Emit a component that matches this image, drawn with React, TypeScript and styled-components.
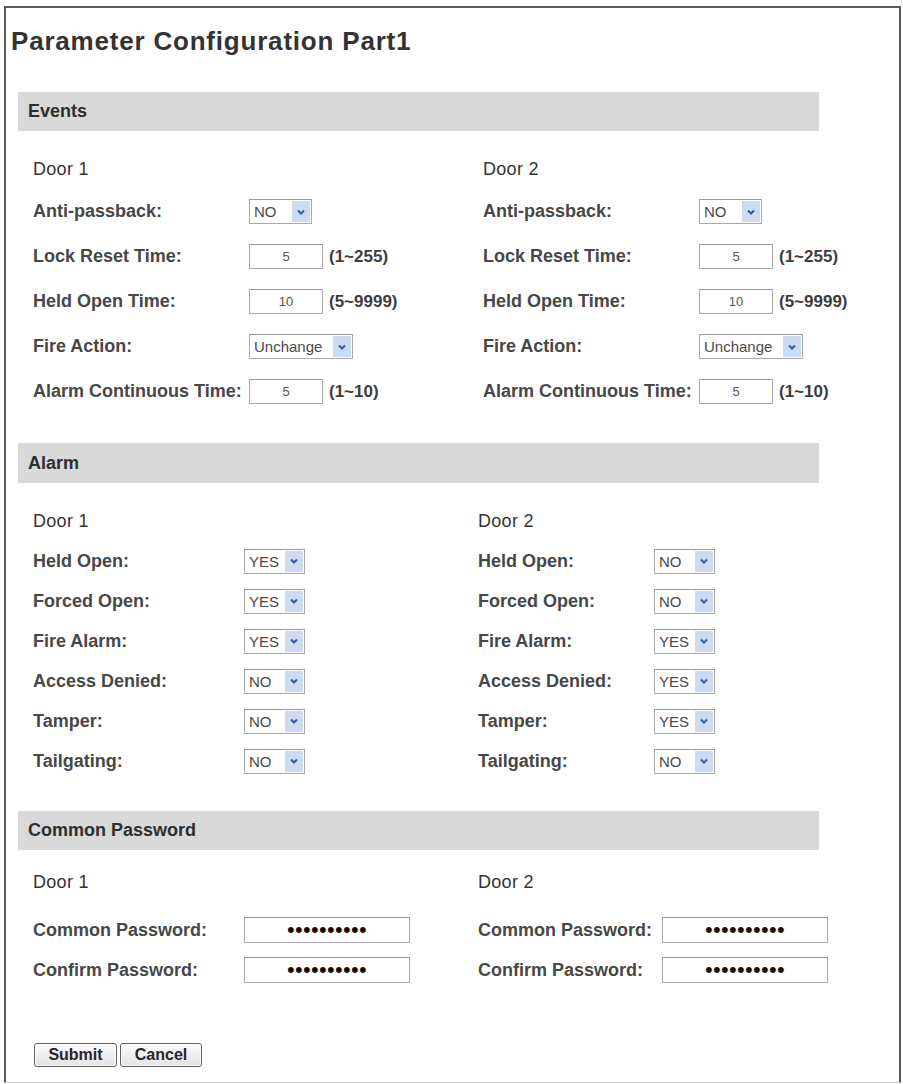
import React from "react";
import styled, { createGlobalStyle } from "styled-components";

const GlobalStyle = createGlobalStyle`
  html, body { margin: 0; padding: 0; background: #fff; }
  body { font-family: "Liberation Sans", Arial, sans-serif; color: #3d3d3d; }
`;

const Frame = styled.div`
  box-sizing: border-box;
  margin: 6px 0 0 4px;
  width: 897px;
  height: 1077px;
  border: 2px solid #5a5a5a;
  border-bottom: 1px solid #d0d0d0;
  padding: 0 0 0 12px;
  background: #fff;
  display: flex;
  flex-direction: column;
`;

const Title = styled.h1`
  margin: 18px 0 0 -7px;
  font-size: 26px;
  font-weight: 700;
  line-height: 30px;
  letter-spacing: 0.8px;
  color: #333;
`;

const SectionBar = styled.div<{ $top: number; $h: number }>`
  margin-top: ${(p) => p.$top}px;
  width: 801px;
  height: ${(p) => p.$h}px;
  box-sizing: border-box;
  padding-left: 10px;
  display: flex;
  align-items: center;
  background: #d9d9d9;
  font-size: 18px;
  font-weight: 700;
  color: #2e2e2e;
`;

const SectionBody = styled.div<{ $pad: number; $col: number }>`
  padding: ${(p) => p.$pad}px 0 0 15px;
  display: grid;
  grid-template-columns: ${(p) => p.$col}px 1fr;
`;

const Column = styled.div`
  display: flex;
  flex-direction: column;
`;

const DoorTitle = styled.div<{ $after: number }>`
  height: 40px;
  display: flex;
  align-items: center;
  margin-bottom: ${(p) => p.$after}px;
  font-size: 18px;
  font-weight: 400;
  letter-spacing: 0.3px;
  color: #333;
`;

const Row = styled.div<{ $h: number }>`
  height: ${(p) => p.$h}px;
  display: flex;
  align-items: center;
`;

const Label = styled.label<{ $w: number }>`
  width: ${(p) => p.$w}px;
  flex: none;
  font-size: 18px;
  font-weight: 700;
  color: #474747;
  white-space: nowrap;
`;

const SelectBox = styled.span<{ $w: number }>`
  box-sizing: border-box;
  width: ${(p) => p.$w}px;
  height: 25px;
  display: inline-flex;
  align-items: stretch;
  border: 1px solid #a9a9a9;
  border-top-color: #9a9a9a;
  background: #fff;
  padding: 1px;
`;

const NativeSelect = styled.select`
  appearance: none;
  -webkit-appearance: none;
  flex: 1;
  min-width: 0;
  border: none;
  outline: none;
  background: transparent;
  padding: 0 0 0 3px;
  margin: 0;
  font-family: "Liberation Sans", Arial, sans-serif;
  font-size: 15px;
  color: #4a4a4a;
`;

const ArrowBox = styled.span`
  width: 18px;
  flex: none;
  display: flex;
  align-items: center;
  justify-content: center;
  background: #cddbf2;
`;

const NumInput = styled.input`
  box-sizing: border-box;
  width: 74px;
  height: 25px;
  border: 1px solid #a9a9a9;
  border-top-color: #999;
  padding: 0;
  margin: 0;
  text-align: center;
  font-family: "Liberation Sans", Arial, sans-serif;
  font-size: 13px;
  color: #555;
  background: #fff;
`;

const Range = styled.span`
  margin-left: 6px;
  font-size: 17px;
  font-weight: 700;
  color: #3d3d3d;
  white-space: nowrap;
`;

const PassInput = styled.input`
  box-sizing: border-box;
  width: 166px;
  height: 26px;
  border: 1px solid #aaa;
  border-top-color: #999;
  padding: 0;
  margin: 0;
  text-align: center;
  font-family: "Liberation Sans", Arial, sans-serif;
  font-size: 22px;
  letter-spacing: 0.3px;
  color: #111;
  background: #fff;
`;

const ButtonBar = styled.div`
  margin: 53px 0 0 16px;
  display: flex;
  gap: 3px;
`;

const Button = styled.button<{ $w: number }>`
  box-sizing: border-box;
  width: ${(p) => p.$w}px;
  height: 24px;
  padding: 0;
  border: 1px solid #5f5f5f;
  border-radius: 3px;
  background: linear-gradient(#fbfbfb, #e3e3e3);
  box-shadow: inset 0 0 0 1px #fff;
  font-family: "Liberation Sans", Arial, sans-serif;
  font-size: 16px;
  font-weight: 700;
  color: #2a2330;
`;

const Chevron = () => (
  <svg width="8" height="6" viewBox="0 0 8 6">
    <polyline points="1,1.5 4,4.5 7,1.5" fill="none" stroke="#2f5aa8" strokeWidth="2" />
  </svg>
);

const Select = ({ value, options, width }: { value: string; options: string[]; width: number }) => (
  <SelectBox $w={width}>
    <NativeSelect defaultValue={value}>
      {options.map((o) => (
        <option key={o}>{o}</option>
      ))}
    </NativeSelect>
    <ArrowBox>
      <Chevron />
    </ArrowBox>
  </SelectBox>
);

const EventsColumn = ({ door, held }: { door: string; held: string }) => (
  <Column>
    <DoorTitle $after={0}>{door}</DoorTitle>
    <Row $h={45}>
      <Label $w={216}>Anti-passback:</Label>
      <Select value="NO" options={["NO", "YES"]} width={63} />
    </Row>
    <Row $h={45}>
      <Label $w={216}>Lock Reset Time:</Label>
      <NumInput defaultValue="5" />
      <Range>(1~255)</Range>
    </Row>
    <Row $h={45}>
      <Label $w={216}>Held Open Time:</Label>
      <NumInput defaultValue={held} />
      <Range>(5~9999)</Range>
    </Row>
    <Row $h={45}>
      <Label $w={216}>Fire Action:</Label>
      <Select value="Unchange" options={["Unchange", "Open", "Close"]} width={104} />
    </Row>
    <Row $h={45}>
      <Label $w={216}>Alarm Continuous Time:</Label>
      <NumInput defaultValue="5" />
      <Range>(1~10)</Range>
    </Row>
  </Column>
);

const alarmLabels = ["Held Open:", "Forced Open:", "Fire Alarm:", "Access Denied:", "Tamper:", "Tailgating:"];

const AlarmColumn = ({ door, values, labelW }: { door: string; values: string[]; labelW: number }) => (
  <Column>
    <DoorTitle $after={0}>{door}</DoorTitle>
    {alarmLabels.map((l, i) => (
      <Row $h={40} key={l}>
        <Label $w={labelW}>{l}</Label>
        <Select value={values[i]} options={["YES", "NO"]} width={61} />
      </Row>
    ))}
  </Column>
);

const PasswordColumn = ({ door, labelW }: { door: string; labelW: number }) => (
  <Column>
    <DoorTitle $after={8}>{door}</DoorTitle>
    <Row $h={40}>
      <Label $w={labelW}>Common Password:</Label>
      <PassInput type="password" defaultValue="1234567890" />
    </Row>
    <Row $h={40}>
      <Label $w={labelW}>Confirm Password:</Label>
      <PassInput type="password" defaultValue="1234567890" />
    </Row>
  </Column>
);

export default function App() {
  return (
    <>
      <GlobalStyle />
      <Frame>
        <Title>Parameter Configuration Part1</Title>

        <SectionBar $top={36} $h={39}>Events</SectionBar>
        <SectionBody $pad={18} $col={450}>
          <EventsColumn door="Door 1" held="10" />
          <EventsColumn door="Door 2" held="10" />
        </SectionBody>

        <SectionBar $top={29} $h={40}>Alarm</SectionBar>
        <SectionBody $pad={18} $col={445}>
          <AlarmColumn door="Door 1" values={["YES", "YES", "YES", "NO", "NO", "NO"]} labelW={211} />
          <AlarmColumn door="Door 2" values={["NO", "NO", "YES", "YES", "YES", "NO"]} labelW={176} />
        </SectionBody>

        <SectionBar $top={30} $h={39}>Common Password</SectionBar>
        <SectionBody $pad={12} $col={445}>
          <PasswordColumn door="Door 1" labelW={211} />
          <PasswordColumn door="Door 2" labelW={184} />
        </SectionBody>

        <ButtonBar>
          <Button $w={83}>Submit</Button>
          <Button $w={82}>Cancel</Button>
        </ButtonBar>
      </Frame>
    </>
  );
}
